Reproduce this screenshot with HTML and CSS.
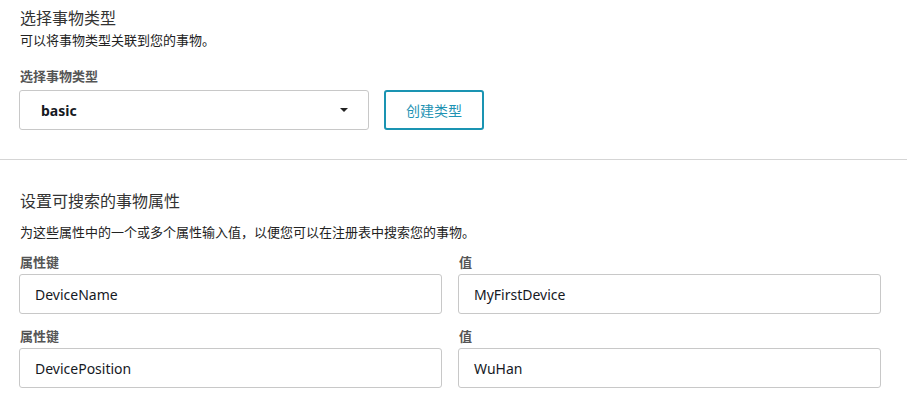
FILE: index.html
```html
<!DOCTYPE html>
<html lang="zh">
<head>
<meta charset="utf-8">
<link rel="stylesheet" href="styles.css">
</head>
<body>
<section class="section first">
  <h2 class="title">选择事物类型</h2>
  <p class="desc">可以将事物类型关联到您的事物。</p>
  <div class="label">选择事物类型</div>
  <div class="type-row">
    <div class="select">
      <span class="select-value">basic</span>
      <svg class="caret" width="8" height="4" viewBox="0 0 8 4"><path d="M0 0H8L4 4Z" fill="#222"/></svg>
    </div>
    <button class="btn">创建类型</button>
  </div>
</section>
<section class="section second">
  <h2 class="title">设置可搜索的事物属性</h2>
  <p class="desc">为这些属性中的一个或多个属性输入值，以便您可以在注册表中搜索您的事物。</p>
  <div class="grid">
    <div class="field">
      <div class="label">属性键</div>
      <div class="input">DeviceName</div>
    </div>
    <div class="field">
      <div class="label">值</div>
      <div class="input">MyFirstDevice</div>
    </div>
    <div class="field">
      <div class="label">属性键</div>
      <div class="input">DevicePosition</div>
    </div>
    <div class="field">
      <div class="label">值</div>
      <div class="input">WuHan</div>
    </div>
  </div>
</section>
</body>
</html>
```

FILE: styles.css
```css
* { box-sizing: border-box; }
body {
  margin: 0;
  background: #fff;
  font-family: "Noto Sans", "Noto Sans CJK SC", sans-serif;
  color: #222;
}
.section { padding: 0 26px 0 19px; }
.first {
  padding-top: 6px;
  padding-bottom: 29px;
  border-bottom: 1px solid #d5d5d5;
}
.second { padding-top: 29px; }
.title {
  margin: 0 1px;
  font-size: 16px;
  line-height: 22px;
  font-weight: normal;
  color: #333;
  font-family: "Noto Sans CJK SC", sans-serif;
}
.desc {
  margin: 2px 1px 0;
  font-size: 13px;
  line-height: 20px;
  color: #222;
  font-family: "Noto Sans CJK SC", sans-serif;
}
.second .desc { margin-top: 11px; }
.label {
  margin: 0 1px;
  font-size: 13px;
  line-height: 20px;
  font-weight: bold;
  color: #555;
  font-family: "Noto Sans CJK SC", sans-serif;
}
.first .label { margin-top: 16px; margin-bottom: 4px; }
.type-row {
  display: flex;
  gap: 15px;
}
.select {
  width: 350px;
  height: 40px;
  border: 1px solid #c8c8c8;
  border-radius: 3px;
  display: flex;
  align-items: center;
  justify-content: space-between;
  padding: 0 20px 0 21px;
}
.select-value {
  font-size: 14px;
  font-weight: bold;
  color: #16191f;
}
.caret { display: block; }
.btn {
  width: 100px;
  height: 40px;
  border: 2px solid #1a94b2;
  border-radius: 3px;
  background: #fff;
  color: #1f93b3;
  font-family: "Noto Sans CJK SC", sans-serif;
  font-size: 14px;
  padding: 0;
}
.grid {
  margin-top: 10px;
  display: grid;
  grid-template-columns: 1fr 1fr;
  column-gap: 16px;
  row-gap: 12px;
}
.field .label { margin-bottom: 2px; }
.input {
  height: 40px;
  border: 1px solid #c8c8c8;
  border-radius: 3px;
  padding: 0 15px;
  display: flex;
  align-items: center;
  font-size: 14px;
  color: #16191f;
}
```
